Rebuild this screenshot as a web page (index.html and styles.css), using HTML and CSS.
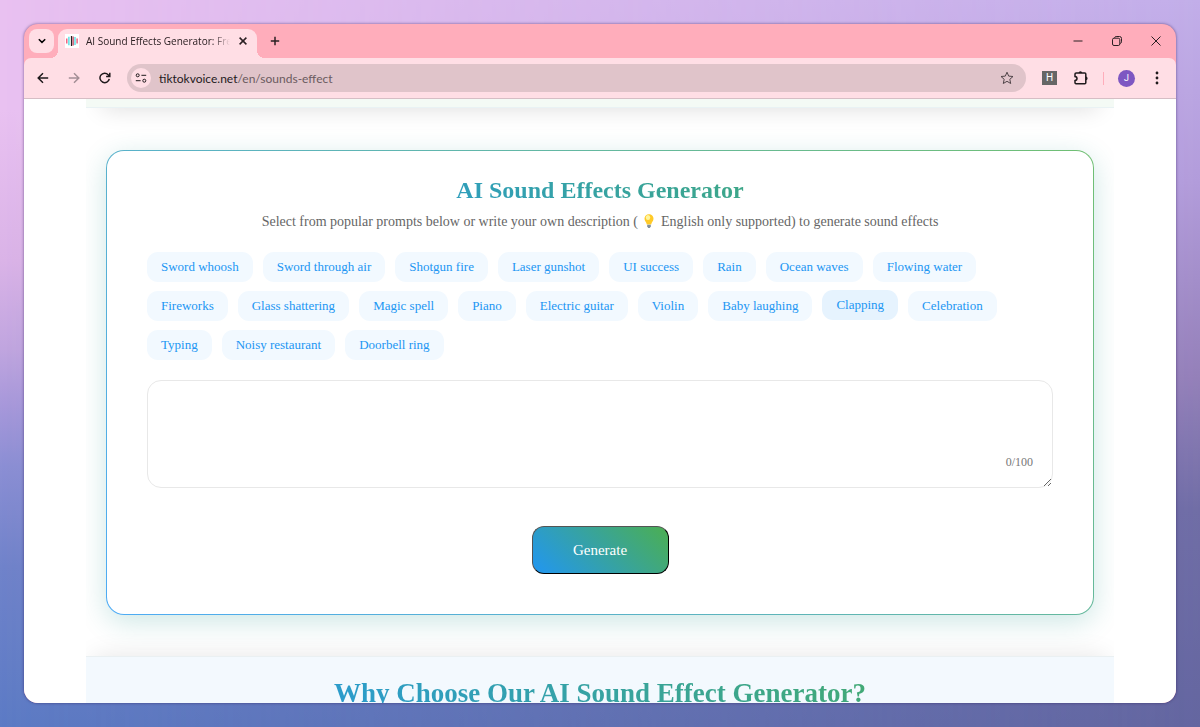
FILE: index.html
```html
<!DOCTYPE html>
<html lang="en">

<head>
    <meta charset="UTF-8">
    <meta name="viewport" content="width=device-width, initial-scale=1.0">
    <title>AI Sound Effects Generator</title>
    <link rel="stylesheet" href="styles.css">
</head>

<body>
    <div class="window">
        <div class="tab_strip">
            <button class="tab_search" aria-label="Search tabs">
                <svg width="10" height="10" viewBox="0 0 10 10"><path d="M1.8 3.2 5 6.4l3.2-3.2" /></svg>
            </button>
            <div class="tab">
                <svg class="favicon" width="14" height="14" viewBox="0 0 14 14">
                    <rect width="14" height="14" fill="#fff" />
                    <path stroke="#ee3f63" d="M1.8 4.5v5" />
                    <path stroke="#35dce0" d="M3.9 2.8v8.4" />
                    <path stroke="#222" d="M6.5 2v10" />
                    <path stroke="#c23250" d="M8.1 2.5v9" />
                    <path stroke="#35dce0" d="M10 3v8" />
                    <path stroke="#ee3f63" d="M12.1 4.5v5" />
                </svg>
                <span class="tab_title">AI Sound Effects Generator: Free</span>
                <button class="icon_btn" aria-label="Close tab">
                    <svg width="10" height="10" viewBox="0 0 10 10"><path d="m1.6 1.6 6.8 6.8M8.4 1.6 1.6 8.4" /></svg>
                </button>
            </div>
            <button class="icon_btn new_tab" aria-label="New tab">
                <svg width="10" height="10" viewBox="0 0 10 10"><path d="M5 .8v8.4M.8 5h8.4" /></svg>
            </button>
            <div class="window_controls">
                <button class="icon_btn" aria-label="Minimize">
                    <svg width="10" height="10" viewBox="0 0 10 10"><path d="M.5 5h9" /></svg>
                </button>
                <button class="icon_btn" aria-label="Restore">
                    <svg width="10" height="10" viewBox="0 0 10 10"><rect x=".5" y="2.2" width="7.3" height="7.3" rx="1.5" /><path d="M2.5 1.8Q3 .5 4.2.5h3.3Q9.5.5 9.5 2.5v3.3q0 1.2-1.3 1.7" /></svg>
                </button>
                <button class="icon_btn" aria-label="Close">
                    <svg width="10" height="10" viewBox="0 0 10 10"><path d="m.5.5 9 9M9.5.5l-9 9" /></svg>
                </button>
            </div>
        </div>

        <div class="toolbar">
            <div class="nav">
                <button class="icon_btn" aria-label="Back">
                    <svg width="12" height="12" viewBox="0 0 12 12"><path d="M11.2 6H1.3M6 1.2 1.2 6 6 10.8" /></svg>
                </button>
                <button class="icon_btn forward" aria-label="Forward" disabled>
                    <svg width="12" height="12" viewBox="0 0 12 12"><path d="M.8 6h9.9M6 1.2 10.8 6 6 10.8" /></svg>
                </button>
                <button class="icon_btn" aria-label="Reload">
                    <svg width="12" height="12" viewBox="0 0 12 12"><path d="M10.3 6.8A4.7 4.7 0 1 1 9.2 2.8L10.8 4.4M10.8 .8v3.7H7.1" /></svg>
                </button>
            </div>
            <div class="address">
                <button class="site_info" aria-label="Site information">
                    <svg width="12" height="12" viewBox="0 0 12 12"><circle cx="2.7" cy="3.3" r="1.5" /><path d="M6.4 3.3h4.8M.8 8.7h4.8" /><circle cx="9.3" cy="8.7" r="1.5" /></svg>
                </button>
                <span class="url">tiktokvoice.net<span class="url_path">/en/sounds-effect</span></span>
                <button class="icon_btn star" aria-label="Bookmark">
                    <svg width="14" height="14" viewBox="0 0 14 14"><path d="m7 1.2 1.7 3.9 4.3.4-3.2 2.8.9 4.2L7 10.3l-3.7 2.2.9-4.2L1 5.5l4.3-.4z" /></svg>
                </button>
            </div>
            <div class="extensions">
                <button class="ext_h" aria-label="Extension H">H</button>
                <button class="icon_btn puzzle" aria-label="Extensions">
                    <svg width="16" height="16" viewBox="0 0 16 16"><path d="M3.2 3h8.6q1 0 1 1v8.8q0 1-1 1H3q-1 0-1-1v-2.2q2-.2 2-2t-2-2V4q0-1 1.2-1z" /><path class="knob" d="M5.6 3a1.8 1.8 0 0 1 3.6 0zM12.8 6.6a1.8 1.8 0 0 1 0 3.6z" /></svg>
                </button>
                <span class="divider"></span>
                <button class="avatar" aria-label="Profile">J</button>
                <button class="icon_btn dots" aria-label="Menu">
                    <svg width="4" height="14" viewBox="0 0 4 14"><circle cx="2" cy="2" r="1.4" /><circle cx="2" cy="7" r="1.4" /><circle cx="2" cy="12" r="1.4" /></svg>
                </button>
            </div>
        </div>

        <div class="viewport">
            <main class="page">
                <section class="previous"></section>

                <section class="generator">
                    <div class="card">
                        <h1>AI Sound Effects Generator</h1>
                        <p class="intro">Select from popular prompts below or write your own description (
                            <svg class="bulb" width="14" height="14" viewBox="0 0 14 14"><path fill="#ffca28" d="M7 .3a4.4 4.4 0 0 0-4.5 4.5c0 2.3 1.8 3 2.3 5.8h4.4c.5-2.8 2.3-3.5 2.3-5.8A4.4 4.4 0 0 0 7 .3z" /><ellipse cx="6" cy="3.6" rx="2.2" ry="2.5" fill="#fff59d" /><path fill="#82909a" d="M5.2 10.8h3.6v1.8L7.8 14H6.2l-1-1.4z" /></svg>
                            English only supported) to generate sound effects</p>

                        <div class="prompts">
                            <button>Sword whoosh</button>
                            <button>Sword through air</button>
                            <button>Shotgun fire</button>
                            <button>Laser gunshot</button>
                            <button>UI success</button>
                            <button>Rain</button>
                            <button>Ocean waves</button>
                            <button>Flowing water</button>
                            <button>Fireworks</button>
                            <button>Glass shattering</button>
                            <button>Magic spell</button>
                            <button>Piano</button>
                            <button>Electric guitar</button>
                            <button>Violin</button>
                            <button>Baby laughing</button>
                            <button class="active">Clapping</button>
                            <button>Celebration</button>
                            <button>Typing</button>
                            <button>Noisy restaurant</button>
                            <button>Doorbell ring</button>
                        </div>

                        <div class="prompt_box">
                            <textarea id="prompt" maxlength="100" aria-label="Sound description"></textarea>
                            <label class="counter" for="prompt">0/100</label>
                        </div>

                        <button class="generate">Generate</button>
                    </div>
                </section>

                <section class="why">
                    <h2>Why Choose Our AI Sound Effect Generator?</h2>
                </section>
            </main>
        </div>
    </div>

    <script>
        const prompt_input = document.getElementById("prompt");

        function update_counter() {
            document.querySelector(".counter").innerText = `${prompt_input.value.length}/100`;
        }

        prompt_input.addEventListener("input", update_counter);

        document.querySelectorAll(".prompts button").forEach(function (button) {
            button.addEventListener("click", function () {
                prompt_input.value = button.innerText;
                update_counter();
            });
        });
    </script>
</body>

</html>
```
FILE: styles.css
```css
* {
    box-sizing: border-box;
}

body {
    margin: 0;
    padding: 24px;
    height: 100vh;
    overflow: hidden;
    position: relative;
    font-family: "Liberation Serif", "Times New Roman", serif;
    background: linear-gradient(#e9c1f1 15%, #dab3e7 36%, #c0a5df 48%, #a698da 56%, #8c8fd4 64%, #7083ca 78%, #5c7bc5 100%);
}

/* right half of the backdrop, faded in over the left one */
body::before {
    content: "";
    position: absolute;
    inset: 0;
    background: linear-gradient(#c2aee9 0%, #b29cdb 25%, #9480b9 52%, #706da6 70%, #6466a0 100%);
    -webkit-mask-image: linear-gradient(to right, transparent, #000);
    mask-image: linear-gradient(to right, transparent, #000);
}

button {
    padding: 0;
    border: none;
    background: none;
    font-family: inherit;
    cursor: pointer;
}

svg {
    display: block;
    fill: none;
    stroke: currentColor;
}

.window {
    position: relative;
    display: flex;
    flex-direction: column;
    height: 100%;
    border-radius: 14px;
    overflow: hidden;
    background-color: #ffadbb;
    box-shadow: 0 0 3px rgba(40, 20, 80, 0.6);
}

.tab_strip {
    display: flex;
    align-items: center;
    height: 34px;
    flex-shrink: 0;
    padding: 0 15px 0 5px;
    color: #2b2023;
    font-family: "Open Sans", sans-serif;
}

.icon_btn {
    display: flex;
    align-items: center;
    justify-content: center;
    color: inherit;
}

.tab_search {
    display: flex;
    align-items: center;
    justify-content: center;
    width: 25px;
    height: 24px;
    border-radius: 8px;
    background-color: #ffdee5;
}

.tab_search svg,
.tab .icon_btn svg,
.new_tab svg,
.nav svg {
    stroke-width: 1.5;
}

.tab {
    position: relative;
    display: flex;
    align-items: center;
    align-self: flex-end;
    width: 199px;
    height: 29px;
    margin-left: 4px;
    padding: 0 9px 5px 7px;
    border-radius: 9px 9px 0 0;
    background-color: #ffdee5;
}

/* flared feet of the tab */
.tab::before,
.tab::after {
    content: "";
    position: absolute;
    bottom: 0;
    width: 8px;
    height: 8px;
}

.tab::before {
    right: 100%;
    background: radial-gradient(circle at 0 0, transparent 8px, #ffdee5 8px);
}

.tab::after {
    left: 100%;
    background: radial-gradient(circle at 100% 0, transparent 8px, #ffdee5 8px);
}

.tab_title {
    flex: 1;
    margin: 0 8px 0 7px;
    overflow: hidden;
    white-space: nowrap;
    font-size: 10px;
    -webkit-mask-image: linear-gradient(to right, #000 88%, transparent);
    mask-image: linear-gradient(to right, #000 88%, transparent);
}

.favicon {
    stroke-width: 1.2;
}

.favicon rect {
    stroke: none;
}

.new_tab {
    margin-left: 13px;
}

.window_controls {
    display: flex;
    gap: 29px;
    margin-left: auto;
}

.toolbar {
    display: flex;
    align-items: center;
    height: 41px;
    flex-shrink: 0;
    padding: 0 17px 0 13px;
    border-radius: 7px 7px 0 0;
    background-color: #ffdee5;
    border-bottom: 1px solid #d6bec5;
    color: #1f1a1c;
    font-family: Lato, sans-serif;
}

.nav {
    display: flex;
    gap: 19px;
}

.forward {
    color: #a48f96;
}

.address {
    display: flex;
    align-items: center;
    flex: 1;
    height: 28px;
    margin: 0 16px;
    padding: 0 12px 0 4px;
    border-radius: 14px;
    background-color: #e0c4ca;
}

.site_info {
    display: flex;
    align-items: center;
    justify-content: center;
    width: 20px;
    height: 20px;
    border-radius: 50%;
    background-color: #ffdee5;
    color: #1f1a1c;
}

.url {
    margin-left: 8px;
    font-size: 12px;
}

.url_path {
    color: #6b5b60;
}

.star {
    margin-left: auto;
    color: #4f4448;
}

.extensions {
    display: flex;
    align-items: center;
}

.ext_h {
    width: 15px;
    height: 14px;
    background-color: #666;
    color: #fff;
    font-family: Roboto, sans-serif;
    font-size: 10px;
    line-height: 14px;
}

.puzzle {
    margin-left: 16px;
}

.puzzle svg {
    stroke-width: 1.5;
}

.knob,
.dots svg {
    fill: currentColor;
    stroke: none;
}

.divider {
    width: 1px;
    height: 13px;
    margin: 0 14px;
    background-color: #ffadbb;
}

.avatar {
    width: 17px;
    height: 17px;
    border-radius: 50%;
    background-color: #7e57c2;
    color: #fff;
    font-family: Roboto, sans-serif;
    font-size: 9px;
}

.dots {
    margin-left: 20px;
}

.viewport {
    flex: 1;
    overflow: hidden;
    padding: 0 62px;
    background-color: #fff;
}

.page {
    height: 100%;
    overflow: hidden;
}

/* only the bottom edge of this section is scrolled into view */
.previous {
    height: 100px;
    margin-top: -91px;
    background-color: #f4faf5;
    border-bottom: 1px solid #e9f2f4;
    box-shadow: 0 16px 24px -16px rgba(0, 0, 0, 0.14);
}

.generator {
    padding: 42px 20px 41px;
}

.card {
    display: flex;
    flex-direction: column;
    align-items: center;
    padding: 23px 40px 40px;
    border: 1px solid transparent;
    border-radius: 18px;
    background:
        linear-gradient(#fff, #fff) padding-box,
        linear-gradient(45deg, #4dabf5, #70bf73) border-box;
    box-shadow: 0 7px 29px rgba(0, 137, 123, 0.2);
}

h1,
h2 {
    width: 100%;
    margin: 0;
    text-align: center;
    color: transparent;
    background: linear-gradient(45deg, #2196f3, #4caf50);
    -webkit-background-clip: text;
    background-clip: text;
}

h1 {
    font-size: 24px;
    line-height: 32px;
}

.intro {
    margin: 6px 0 20px;
    color: #666;
    font-size: 14px;
    line-height: 20px;
}

.bulb {
    display: inline-block;
    margin-right: 2px;
    vertical-align: -2px;
    stroke: none;
}

.prompts {
    display: flex;
    flex-wrap: wrap;
    gap: 9px 10px;
    width: 100%;
}

.prompts button {
    height: 30px;
    padding: 0 14px;
    border-radius: 11px;
    background-color: #f2f9ff;
    color: #2196f3;
    font-size: 13px;
}

.prompts button:hover,
.prompts .active {
    background-color: #e6f3fe;
    transform: translateY(-1px);
}

.prompt_box {
    position: relative;
    width: 100%;
    margin-top: 20px;
}

textarea {
    display: block;
    width: 100%;
    height: 108px;
    padding: 14px;
    border: 1px solid #e8e8e8;
    border-radius: 14px;
    outline: none;
    resize: vertical;
    font-family: inherit;
    font-size: 14px;
}

.counter {
    position: absolute;
    right: 20px;
    bottom: 18px;
    color: #777;
    font-size: 12px;
}

.generate {
    width: 137px;
    height: 48px;
    margin-top: 38px;
    border: 1px outset #000;
    border-radius: 12px;
    background: linear-gradient(45deg, #2196f3, #4caf50) border-box;
    color: #fff;
    font-size: 15px;
}

.why {
    padding: 18px 20px 40px;
    border-top: 1px solid #eaf0f2;
    background-color: #f3f9fe;
    box-shadow: 0 -8px 24px -8px rgba(0, 0, 0, 0.1);
}

h2 {
    font-size: 27px;
    line-height: 36px;
}
```
